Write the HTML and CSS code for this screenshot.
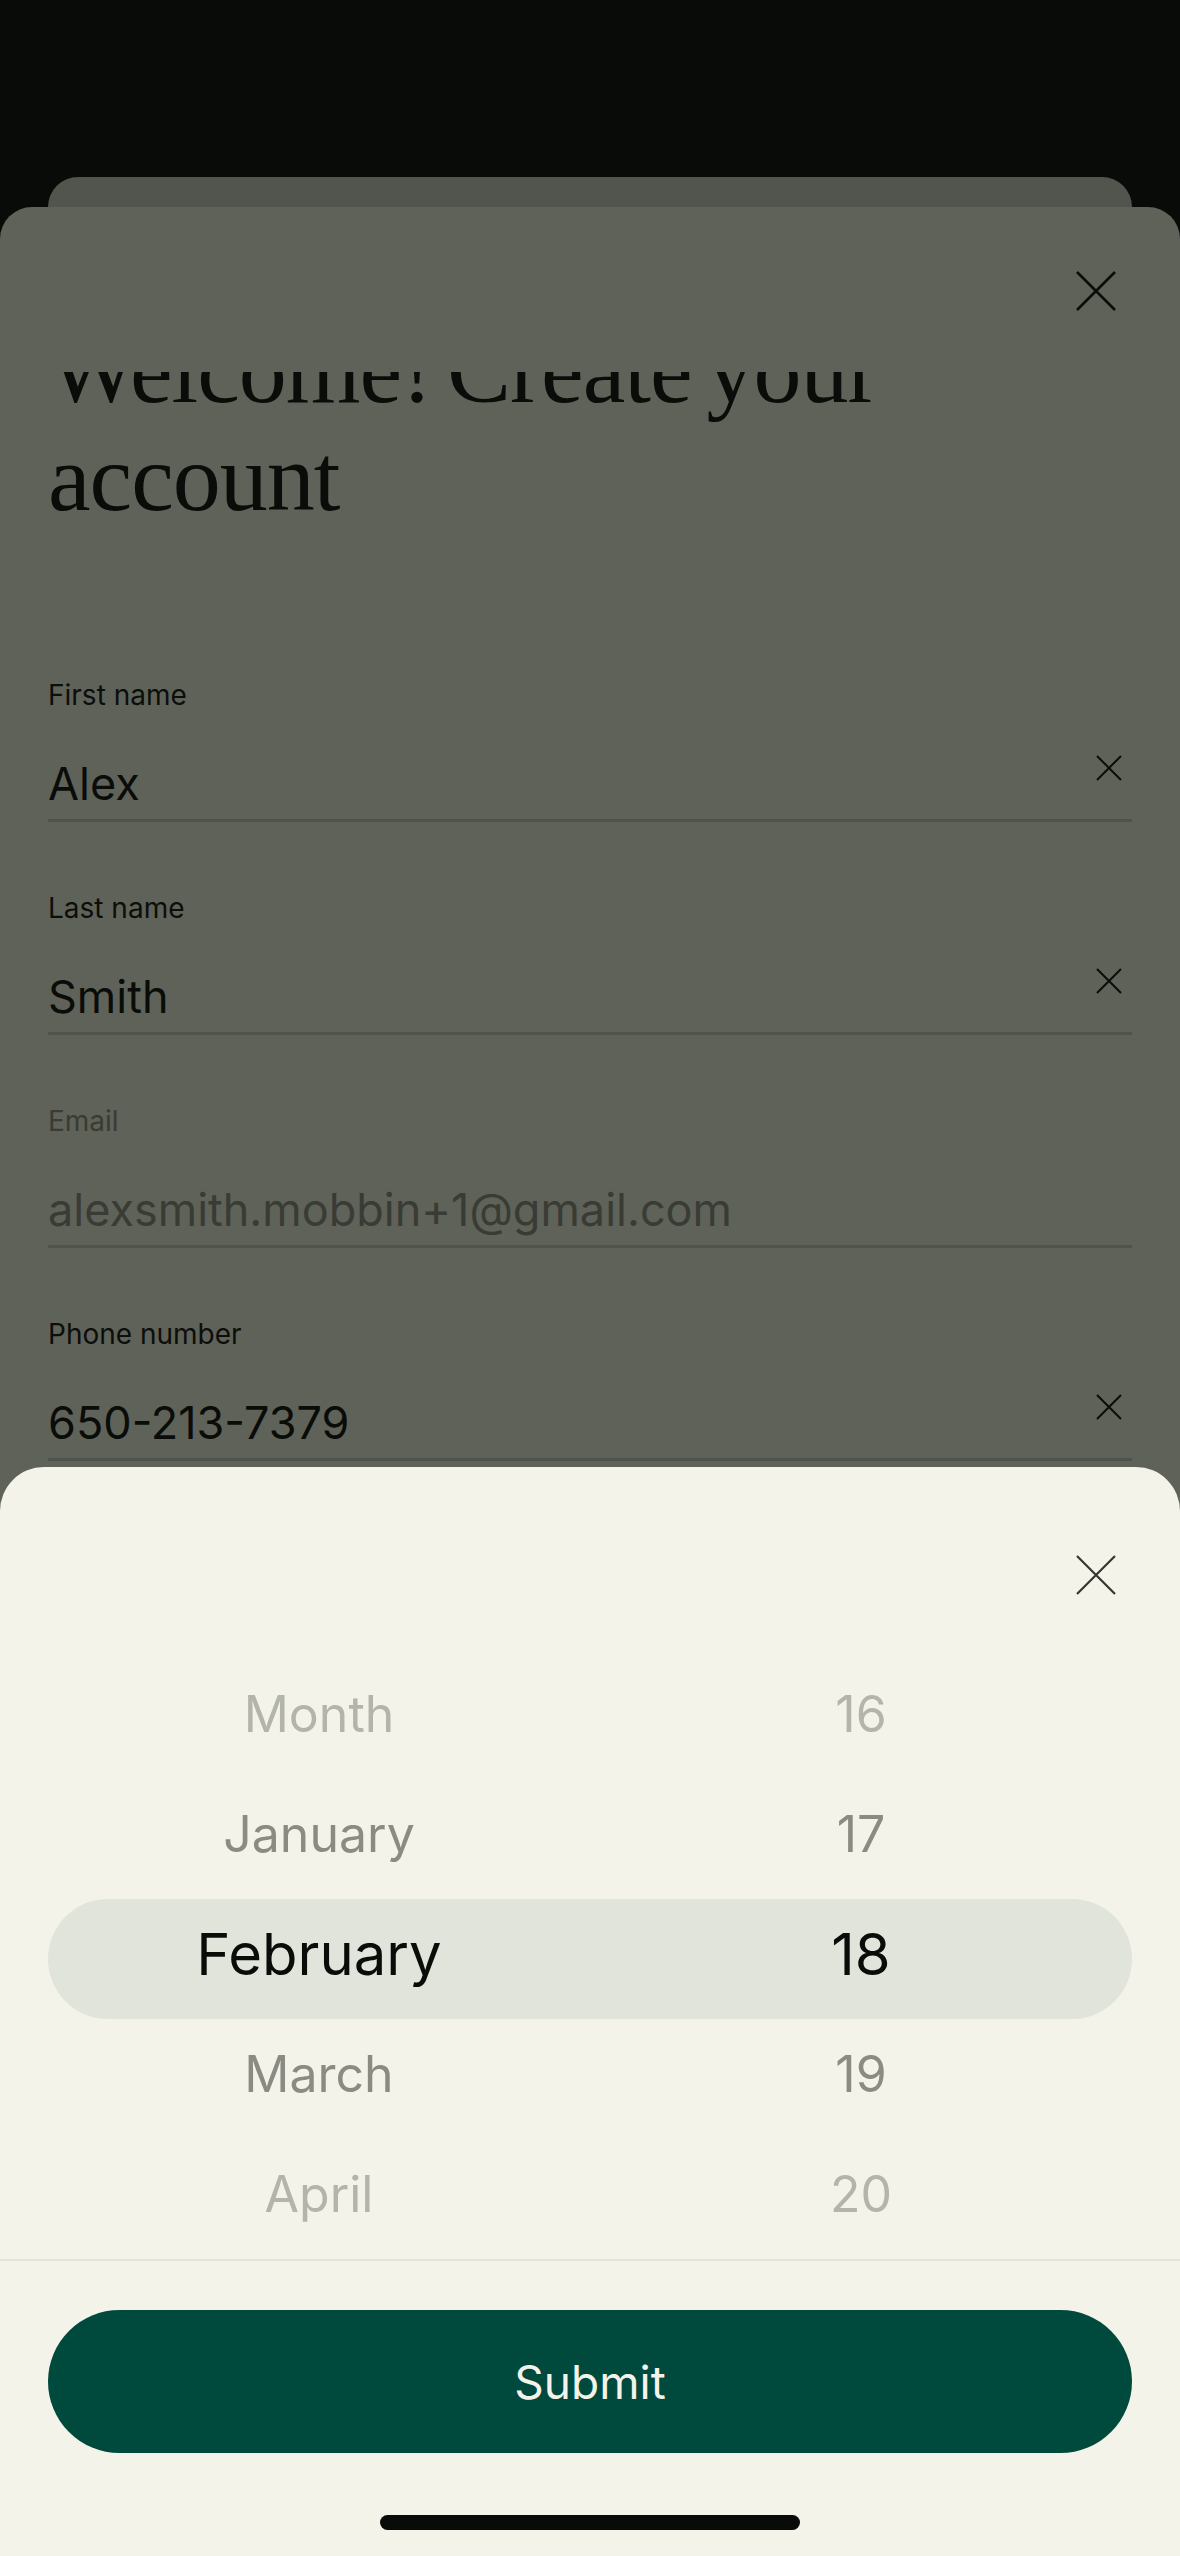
FILE: index.html
```html
<!DOCTYPE html>
<html lang="en">

<head>
  <meta charset="UTF-8" />
  <title>Create your account</title>
  <meta name="viewport" content="width=device-width, initial-scale=1" />
  <link rel="stylesheet" href="styles.css">
</head>

<body>
  <div class="screen">
    <!-- sheet stack: previous sheet peeks out behind the form -->
    <div class="back-card"></div>

    <div class="card">
      <div class="card-top">
        <button class="btn-close" aria-label="Close">
          <svg viewBox="0 0 40 40" width="40" height="40"><path d="M1 1L39 39M39 1L1 39" /></svg>
        </button>
      </div>

      <div class="card-scroll">
        <div class="card-body">
          <h1>Welcome! Create your account</h1>

          <div class="field">
            <label class="field-label">First name</label>
            <div class="field-row">
              <span class="field-value">Alex</span>
              <button class="btn-clear" aria-label="Clear">
                <svg viewBox="0 0 26 26" width="26" height="26"><path d="M1 1L25 25M25 1L1 25" /></svg>
              </button>
            </div>
          </div>

          <div class="field">
            <label class="field-label">Last name</label>
            <div class="field-row">
              <span class="field-value">Smith</span>
              <button class="btn-clear" aria-label="Clear">
                <svg viewBox="0 0 26 26" width="26" height="26"><path d="M1 1L25 25M25 1L1 25" /></svg>
              </button>
            </div>
          </div>

          <div class="field is-locked">
            <label class="field-label">Email</label>
            <div class="field-row">
              <span class="field-value">alexsmith.mobbin+1@gmail.com</span>
            </div>
          </div>

          <div class="field">
            <label class="field-label">Phone number</label>
            <div class="field-row">
              <span class="field-value">650-213-7379</span>
              <button class="btn-clear" aria-label="Clear">
                <svg viewBox="0 0 26 26" width="26" height="26"><path d="M1 1L25 25M25 1L1 25" /></svg>
              </button>
            </div>
          </div>
        </div>
      </div>
    </div>

    <!-- birthday picker sheet -->
    <div class="sheet">
      <div class="sheet-top">
        <button class="btn-close btn-close--light" aria-label="Close">
          <svg viewBox="0 0 40 40" width="40" height="40"><path d="M1 1L39 39M39 1L1 39" /></svg>
        </button>
      </div>

      <div class="picker">
        <div class="picker-row is-far"><span>Month</span><span>16</span></div>
        <div class="picker-row is-near"><span>January</span><span>17</span></div>
        <div class="picker-row is-selected"><span>February</span><span>18</span></div>
        <div class="picker-row is-near"><span>March</span><span>19</span></div>
        <div class="picker-row is-far"><span>April</span><span>20</span></div>
      </div>

      <div class="sheet-footer">
        <button class="btn-submit">Submit</button>
        <div class="home-bar"></div>
      </div>
    </div>
  </div>
</body>

</html>
```

FILE: styles.css
```css
body {
  margin: 0;
  font-family: Inter, 'Noto Sans', sans-serif;
  background-color: #090b08;
  color: #0a0c09;
}

.screen {
  position: relative;
  display: flex;
  flex-direction: column;
  height: 2556px;
  overflow: hidden;
}

.back-card {
  height: 30px;
  margin: 177px 48px 0;
  background-color: #52554d;
  border-radius: 30px 30px 0 0;
}

.card {
  flex: 1;
  padding: 0 48px;
  background-color: #5f6258;
  border-radius: 32px 32px 0 0;
}

button {
  padding: 0;
  border: none;
  background: none;
  font-family: inherit;
  cursor: pointer;
}

.card-top {
  display: flex;
  justify-content: flex-end;
  height: 165px;
  padding: 64px 16px 0 0;
  box-sizing: border-box;
}

.btn-close {
  width: 40px;
  height: 40px;
}

.btn-close svg,
.btn-clear svg {
  display: block;
  fill: none;
  stroke: #0a0c09;
}

.btn-close svg {
  stroke-width: 2.6;
}

.btn-close--light svg {
  stroke: #34362f;
  stroke-width: 2.2;
}

/* form list is scrolled a little, title slides under the top bar */
.card-scroll {
  overflow: hidden;
}

.card-body {
  margin-top: -56px;
}

h1 {
  margin: 0 0 146px;
  font-family: 'Liberation Serif', serif;
  font-size: 96px;
  font-weight: 400;
  line-height: 108px;
  letter-spacing: -1px;
  word-spacing: -8px;
}

.field {
  margin-bottom: 69px;
}

.field-label {
  display: block;
  font-size: 28px;
  line-height: 34px;
  color: #0c0e0b;
}

.field-row {
  display: flex;
  justify-content: space-between;
  align-items: flex-start;
  margin-top: 45px;
  padding-bottom: 8px;
  border-bottom: 3px solid #50534b;
}

.field-value {
  font-size: 45px;
  line-height: 54px;
}

.btn-clear {
  width: 26px;
  height: 26px;
  margin: -2px 10px 0 0;
}

.btn-clear svg {
  stroke-width: 2;
}

.is-locked .field-label,
.is-locked .field-value {
  color: #393b35;
}

.sheet {
  position: absolute;
  left: 0;
  right: 0;
  bottom: 0;
  height: 1089px;
  background-color: #f4f3e9;
  border-radius: 44px 44px 0 0;
}

.sheet-top {
  display: flex;
  justify-content: flex-end;
  padding: 88px 64px 0 0;
}

.picker {
  margin: 64px 48px 0;
}

.picker-row {
  display: grid;
  grid-template-columns: 1fr 1fr;
  height: 120px;
  padding-bottom: 10px;
  box-sizing: border-box;
  text-align: center;
  font-size: 50px;
  line-height: 110px;
}

.picker-row.is-far {
  color: #b3b5ab;
}

.picker-row.is-near {
  color: #8a8c83;
}

.picker-row.is-selected {
  font-size: 58px;
  color: #0a0c09;
  background-color: #e1e4da;
  border-radius: 60px;
}

.sheet-footer {
  padding: 49px 48px 0;
  border-top: 2px solid #e1e4da;
}

.btn-submit {
  display: block;
  width: 100%;
  height: 143px;
  border-radius: 72px;
  background-color: #00493d;
  color: #f4f3e9;
  font-size: 46px;
}

.home-bar {
  width: 420px;
  height: 15px;
  margin: 62px auto 0;
  border-radius: 8px;
  background-color: #090b08;
}
```
